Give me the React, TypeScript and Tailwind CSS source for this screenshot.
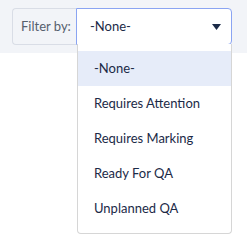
import React from "react";

const items = ["-None-", "Requires Attention", "Requires Marking", "Ready For QA", "Unplanned QA"];

export default function App() {
  return (
    <div className="relative w-[247px] h-[241px] bg-white" style={{ fontFamily: "Lato, 'Noto Sans', sans-serif" }}>
      <div className="bg-[#f2f4f8] px-3 py-2 h-[53px]">
        <div className="flex h-[37px] w-[220px]">
          <div className="flex items-center w-[64px] pl-2 border border-r-0 border-[#d9dde6] rounded-l-[4px] text-[13px] text-[#56606e] bg-[#f2f4f8]">
            Filter by:
          </div>
          <div className="relative flex-1 flex items-center justify-between border border-[#8aa4f2] rounded-r-[4px] bg-white pl-[13px] pr-[10px] text-[13px] text-[#1b2a47]">
            <span>-None-</span>
            <svg width="9" height="6" viewBox="0 0 9 6">
              <path d="M0 0 H9 L4.5 6 Z" fill="#1b2a47" />
            </svg>
            <div className="absolute left-0 top-full w-[155px] bg-white border border-t-0 border-[#d6d6d6] rounded-b-[4px] pt-[7px] pb-[7px]">
              {items.map((it, i) => (
                <div
                  key={it}
                  className={`h-[35px] flex items-center pl-4 text-[13px] text-[#1b2a47] ${i === 0 ? "bg-[#e6ecf9]" : ""}`}
                >
                  {it}
                </div>
              ))}
            </div>
          </div>
        </div>
      </div>
    </div>
  );
}
